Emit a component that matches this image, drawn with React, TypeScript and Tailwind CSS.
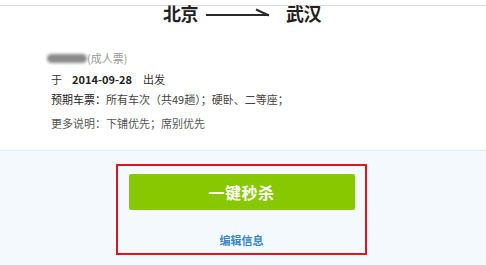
import React from "react";

export default function App() {
  const font = { fontFamily: '"Noto Sans CJK SC", "Noto Sans", sans-serif' };
  return (
    <div className="w-[486px] h-[265px] overflow-hidden bg-white text-[#333]" style={font}>
      <div className="mt-[5px] border-t border-[#dcdcdc] h-[145px] flex flex-col">
        <div className="flex items-center h-[16px] pl-[163px] gap-[8px] -mt-[1px]">
          <span className="text-[18px] font-bold leading-[16px] text-[#222] tracking-[-0.5px]">北京</span>
          <svg width="66" height="12" viewBox="0 0 66 12" className="mt-[2px]">
            <line x1="0" y1="7" x2="63" y2="7" stroke="#2a2a2a" strokeWidth="2" />
            <line x1="63" y1="7.5" x2="50" y2="1.5" stroke="#2a2a2a" strokeWidth="2" />
          </svg>
          <span className="ml-[6px] text-[18px] font-bold leading-[16px] text-[#222] tracking-[-0.5px]">武汉</span>
        </div>
        <div className="pl-[47px] mt-[30px] flex items-center h-[14px]">
          <div className="w-[40px] h-[9px] rounded-full bg-[#8a8a8a] blur-[1.5px]" />
          <span className="text-[11px] leading-[14px] text-[#9a9a9a]">(成人票)</span>
        </div>
        <div className="pl-[51px] mt-[7px] flex items-center h-[14px] text-[11px] leading-[14px] text-[#333]">
          <span>于</span>
          <span className="ml-[10px] font-bold text-[#222]">2014-09-28</span>
          <span className="ml-[11px]">出发</span>
        </div>
        <div className="pl-[51px] mt-[6px] h-[14px] text-[11px] leading-[14px] text-[#444]">
          <span className="text-[#222]">预期车票：</span>所有车次（共49趟）；硬卧、二等座；
        </div>
        <div className="pl-[51px] mt-[10px] h-[14px] text-[11px] leading-[14px] text-[#555]">
          更多说明：下铺优先；席别优先
        </div>
      </div>
      <div className="border-t border-[#e2e9ee] bg-[#f3f9fd] h-[115px] pt-[13px]">
        <div className="ml-[116px] w-[251px] h-[91px] border-2 border-[#e0141e] flex flex-col items-center pt-[8px]">
          <button className="w-[226px] h-[36px] rounded-[2px] bg-[#88c800] text-white text-[16px] font-bold leading-[36px] tracking-[0.5px]">
            一键秒杀
          </button>
          <a className="mt-[23px] text-[11px] font-bold leading-[14px] text-[#3a87c8]">编辑信息</a>
        </div>
      </div>
    </div>
  );
}
